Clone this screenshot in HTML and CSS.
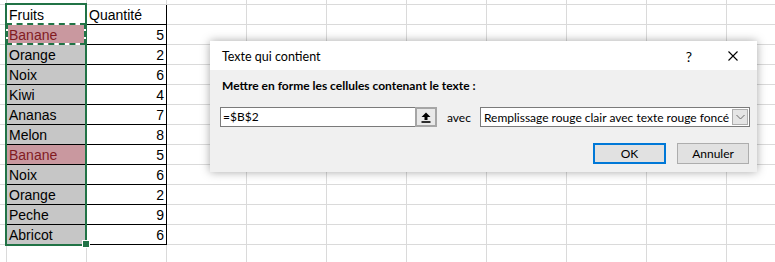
FILE: index.html
```html
<!DOCTYPE html>
<html lang="fr">
<head>
    <meta charset="UTF-8">
    <meta name="viewport" content="width=device-width, initial-scale=1.0">
    <title>Texte qui contient</title>
    <link rel="stylesheet" href="styles.css">
</head>
<body>
    <div class="sheet">
        <div class="sheet-table">
            <div class="cell head">Fruits</div>
            <div class="cell head">Quantité</div>

            <div class="cell fruit match">Banane</div><div class="cell num">5</div>
            <div class="cell fruit">Orange</div><div class="cell num">2</div>
            <div class="cell fruit">Noix</div><div class="cell num">6</div>
            <div class="cell fruit">Kiwi</div><div class="cell num">4</div>
            <div class="cell fruit">Ananas</div><div class="cell num">7</div>
            <div class="cell fruit">Melon</div><div class="cell num">8</div>
            <div class="cell fruit match">Banane</div><div class="cell num">5</div>
            <div class="cell fruit">Noix</div><div class="cell num">6</div>
            <div class="cell fruit">Orange</div><div class="cell num">2</div>
            <div class="cell fruit">Peche</div><div class="cell num">9</div>
            <div class="cell fruit">Abricot</div><div class="cell num">6</div>
        </div>

        <!-- selection A1:A12, copy marquee on A2 -->
        <div class="selection"></div>
        <div class="marquee"></div>
        <div class="fill-handle"></div>
    </div>

    <div class="dialog">
        <div class="dialog-title">
            <span class="title-text">Texte qui contient</span>
            <span class="title-help">?</span>
            <svg class="title-close" width="10" height="10" viewBox="0 0 10 10">
                <path d="M0.5 0.5 L9.5 9.5 M9.5 0.5 L0.5 9.5" stroke="#000" stroke-width="1.1" fill="none"/>
            </svg>
        </div>

        <div class="dialog-body">
            <div class="dialog-label">Mettre en forme les cellules contenant le texte :</div>

            <div class="field-row">
                <div class="text-input">=$B$2</div>
                <div class="ref-button">
                    <svg width="10" height="11" viewBox="0 0 10 11">
                        <path d="M5 0.5 L9.5 5 H6.5 V8 H3.5 V5 H0.5 Z" fill="#000"/>
                        <rect x="0.5" y="9.2" width="9" height="1.6" fill="#000"/>
                    </svg>
                </div>
                <span class="avec">avec</span>
                <div class="select-box">
                    <span class="select-text">Remplissage rouge clair avec texte rouge foncé</span>
                    <div class="select-arrow">
                        <svg width="9" height="6" viewBox="0 0 9 6">
                            <path d="M0.5 1 L4.5 5 L8.5 1" stroke="#6a6a6a" stroke-width="1" fill="none"/>
                        </svg>
                    </div>
                </div>
            </div>

            <div class="dialog-actions">
                <button class="dialog-button default">OK</button>
                <button class="dialog-button">Annuler</button>
            </div>
        </div>
    </div>
</body>
</html>
```

FILE: styles.css
```css
html, body {
    margin: 0;
    height: 262px;
    overflow: hidden;
}

body {
    background-color: #fff;
    background-image:
        linear-gradient(to right, #dadada 1px, transparent 1px),
        linear-gradient(to bottom, #dadada 1px, transparent 1px);
    background-size: 80px 100%, 100% 20px;
    background-position: 6px 0, 0 4px;
    font-family: "Liberation Sans", Arial, sans-serif;
}

.sheet {
    position: relative;
    padding: 5px 0 0 7px;
}

.sheet-table {
    display: grid;
    grid-template-columns: 80px 80px;
}

.cell {
    height: 20px;
    box-sizing: border-box;
    border-right: 1px solid #000;
    border-bottom: 1px solid #000;
    padding: 1px 2px 0 2px;
    font-size: 14px;
    line-height: 19px;
    color: #000;
    background-color: #fff;
    white-space: nowrap;
}

.cell.num {
    text-align: right;
    padding-right: 2px;
}

.cell.fruit {
    background-color: #c6c6c6;
}

.cell.fruit.match {
    background-color: #c9989f;
    color: #821b1f;
}

.selection {
    position: absolute;
    left: 5px;
    top: 3px;
    width: 82px;
    height: 243px;
    box-sizing: border-box;
    border: 2px solid #217346;
}

.marquee {
    position: absolute;
    left: 6px;
    top: 23px;
    width: 80px;
    height: 22px;
    box-sizing: border-box;
    border: 2px solid #fff;
}

.marquee::before {
    content: "";
    position: absolute;
    inset: -2px;
    border: 2px dashed #217346;
}

.fill-handle {
    position: absolute;
    left: 83px;
    top: 241px;
    width: 6px;
    height: 6px;
    background-color: #217346;
    border: 1px solid #fff;
    box-sizing: content-box;
    margin: -1px 0 0 -1px;
}

/* dialog */

.dialog {
    position: absolute;
    left: 210px;
    top: 41px;
    width: 547px;
    height: 131px;
    background-color: #f0f0f0;
    box-shadow: 0 0 9px rgba(0, 0, 0, 0.35);
    font-family: Lato, "Segoe UI", sans-serif;
    font-size: 12px;
    color: #000;
}

.dialog-title {
    height: 29px;
    background-color: #fff;
    display: flex;
    align-items: center;
    padding: 0 19px 0 12px;
}

.title-text {
    flex: 1;
    font-size: 12.5px;
    padding-top: 1px;
}

.title-help {
    font-size: 14px;
    margin-right: 36px;
    padding-top: 1px;
}

.dialog-body {
    padding: 8px 7px 0 10px;
}

.dialog-label {
    height: 16px;
    line-height: 16px;
    margin-left: 2px;
    font-weight: bold;
}

.field-row {
    display: flex;
    align-items: center;
    margin-top: 13px;
    height: 20px;
}

.text-input {
    width: 195px;
    height: 20px;
    box-sizing: border-box;
    border: 1px solid #7a7a7a;
    border-right: none;
    background-color: #fff;
    line-height: 18px;
    padding-left: 2px;
}

.ref-button {
    width: 22px;
    height: 20px;
    box-sizing: border-box;
    border: 2px solid #a6a6a6;
    background-color: #e9e9e9;
    display: flex;
    align-items: center;
    justify-content: center;
}

.ref-button svg {
    display: block;
}

.avec {
    margin-left: 10px;
    margin-right: 9px;
}

.select-box {
    flex: 1;
    height: 20px;
    box-sizing: border-box;
    border: 1px solid #7a7a7a;
    background-color: #fff;
    display: flex;
    align-items: center;
    padding: 0 1px 0 3px;
}

.select-text {
    flex: 1;
    white-space: nowrap;
    overflow: hidden;
}

.select-arrow {
    width: 16px;
    height: 16px;
    box-sizing: border-box;
    border: 1px solid #adadad;
    background-color: #e5e5e5;
    display: flex;
    align-items: center;
    justify-content: center;
}

.dialog-actions {
    display: flex;
    justify-content: flex-end;
    gap: 11px;
    margin-top: 16px;
    margin-right: 1px;
}

.dialog-button {
    width: 72px;
    height: 21px;
    box-sizing: border-box;
    border: 1px solid #adadad;
    background-color: #e1e1e1;
    font-family: Lato, "Segoe UI", sans-serif;
    font-size: 12px;
    color: #000;
    padding: 0;
    line-height: 17px;
}

.dialog-button.default {
    width: 73px;
    border: 2px solid #0078d7;
}
```
